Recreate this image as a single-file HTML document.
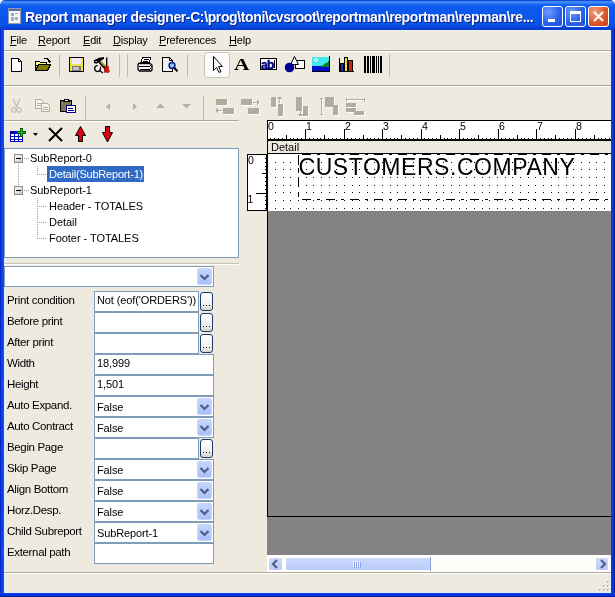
<!DOCTYPE html><html><head><meta charset="utf-8"><style>
*{margin:0;padding:0;box-sizing:border-box}
html,body{width:615px;height:597px;overflow:hidden;background:#fff}
body{position:relative;-webkit-font-smoothing:antialiased;font-family:"Liberation Sans",sans-serif;font-size:11px;color:#000}
.a{position:absolute}
#win{will-change:transform;left:0;top:0;width:615px;height:597px;background:#EEEAE0;border-radius:5px 5px 0 0;overflow:hidden}
#title{left:0;top:0;width:615px;height:30px;background:linear-gradient(180deg,#1048d8 0,#1048d8 1px,#3d8af7 1px,#3d8af7 3px,#1a66f0 4px,#0c5aee 7px,#0a57ec 50%,#0853e6 25px,#0846da 27px,#0a3ccc 29px,#0a3ccc 30px)}
#lb{left:0;top:30px;width:5px;height:567px;background:linear-gradient(90deg,#0628c8 0,#0628c8 1px,#0a44e8 1px,#0a44e8 3px,#1452e0 3px,#1452e0 4px,#e6ecf6 4px)}
#rb{left:610px;top:30px;width:5px;height:567px;background:linear-gradient(90deg,#e6ecf6 0,#e6ecf6 1px,#0a3cd8 1px,#0a3cd8 3px,#0833c0 3px,#0833c0 4px,#001ea0 4px)}
#bb{left:4px;top:592px;width:607px;height:1px;background:#e6ecf6}#bb2{left:0;top:593px;width:615px;height:4px;background:linear-gradient(180deg,#0a44e8 0,#0a44e8 1px,#0831d9 1px,#0831d9 3px,#001ea0 3px)}
.ttl{left:25px;top:9px;color:#fff;font-weight:bold;font-size:14px;white-space:nowrap;text-shadow:1px 1px #0a1e8a;letter-spacing:-0.38px}
.tb{top:6px;width:21px;height:21px;border:1px solid #fff;border-radius:3px;background:radial-gradient(circle at 30% 25%,#6e9cff,#2a63ee 55%,#1b4fd8)}
.mi{top:34px;white-space:nowrap;letter-spacing:-0.2px}
.t{white-space:nowrap;position:absolute}
.lbl{left:7px;font-size:11.5px;letter-spacing:-0.35px}
.box{left:94px;height:21px;background:#fff;border:1px solid #7F9DB9;white-space:nowrap;padding-left:2px;line-height:17px;letter-spacing:-0.12px}
.ell{left:200px;width:13px;height:19px;border:1px solid #1c3a6c;border-radius:3px;background:linear-gradient(180deg,#fff,#f3f1ec 70%,#d9d5c8)}
.dd{width:15px;height:17px;border:1px solid #c8d6fc;border-radius:2px;background:linear-gradient(180deg,#c6d5fd,#b6c9fb 60%,#aac0fa)}
</style></head><body><div id="win" class="a">
<div id="title" class="a"></div><div id="lb" class="a"></div><div id="rb" class="a"></div><div id="bb" class="a"></div><div id="bb2" class="a"></div><div class="a" style="left:4px;top:30px;width:607px;height:1px;background:#eef2f8"></div>
<div class="a ttl">Report manager designer-C:\prog\toni\cvsroot\reportman\reportman\repman\re...</div>
<div class="a tb" style="left:542px"></div><div class="a tb" style="left:565px"></div>
<div class="a tb" style="left:588px;background:radial-gradient(circle at 30% 25%,#f0a080,#e0582e 55%,#c63b14)"></div>
<div class="a mi" style="left:10px"><u>F</u>ile</div>
<div class="a mi" style="left:38px"><u>R</u>eport</div>
<div class="a mi" style="left:83px"><u>E</u>dit</div>
<div class="a mi" style="left:113px"><u>D</u>isplay</div>
<div class="a mi" style="left:159px"><u>P</u>references</div>
<div class="a mi" style="left:229px"><u>H</u>elp</div>
<div class="a" style="left:4px;top:50px;width:607px;height:1px;background:#ACA899"></div>
<div class="a" style="left:4px;top:51px;width:607px;height:1px;background:#fff"></div>
<div class="a" style="left:4px;top:85px;width:607px;height:1px;background:#ACA899"></div>
<div class="a" style="left:4px;top:86px;width:607px;height:1px;background:#fff"></div>
<div class="a" style="left:4px;top:120px;width:235px;height:1px;background:#ACA899"></div>
<div class="a" style="left:4px;top:121px;width:235px;height:1px;background:#fff"></div>
<div class="a" style="left:59px;top:54px;width:1px;height:23px;background:#C2BEAE"></div>
<div class="a" style="left:119px;top:54px;width:1px;height:23px;background:#C2BEAE"></div>
<div class="a" style="left:127px;top:54px;width:1px;height:23px;background:#C2BEAE"></div>
<div class="a" style="left:187px;top:54px;width:1px;height:23px;background:#C2BEAE"></div>
<div class="a" style="left:389px;top:54px;width:1px;height:23px;background:#C2BEAE"></div>
<div class="a" style="left:85px;top:96px;width:1px;height:24px;background:#C2BEAE"></div>
<div class="a" style="left:203px;top:96px;width:1px;height:24px;background:#C2BEAE"></div>
<div class="a" style="left:204px;top:52px;width:26px;height:26px;border:1px solid #c7c4b8;border-radius:3px;background:#fbfbf9"></div>
<div class="a" style="left:4px;top:148px;width:235px;height:110px;background:#fff;border:1px solid #7F9DB9"></div>
<div class="a" style="left:47px;top:166px;width:97px;height:16px;background:#316AC5"></div>
<div class="t" style="left:30px;top:152px;color:#000;letter-spacing:-0.05px">SubReport-0</div>
<div class="t" style="left:49px;top:168px;color:#fff;letter-spacing:-0.2px">Detail(SubReport-1)</div>
<div class="t" style="left:30px;top:184px;color:#000;letter-spacing:-0.05px">SubReport-1</div>
<div class="t" style="left:49px;top:200px;color:#000;letter-spacing:-0.05px">Header - TOTALES</div>
<div class="t" style="left:49px;top:216px;color:#000;letter-spacing:-0.05px">Detail</div>
<div class="t" style="left:49px;top:232px;color:#000;letter-spacing:-0.05px">Footer - TOTALES</div>
<div class="a" style="left:4px;top:263px;width:235px;height:1px;background:#C5C2B2"></div>
<div class="a" style="left:4px;top:264px;width:235px;height:1px;background:#fff"></div>
<div class="a" style="left:4px;top:266px;width:210px;height:21px;background:#fff;border:1px solid #7F9DB9"></div>
<div class="a" style="left:197px;top:268px;width:15px;height:17px;border:1px solid #c8d6fc;border-radius:2px;background:linear-gradient(180deg,#c6d5fd,#b6c9fb 60%,#aac0fa)"></div>
<div class="t lbl" style="top:294px">Print condition</div>
<div class="a box" style="top:291px;width:105px">Not (eof('ORDERS'))</div>
<div class="a ell" style="top:292px"></div>
<div class="t lbl" style="top:315px">Before print</div>
<div class="a box" style="top:312px;width:105px"></div>
<div class="a ell" style="top:313px"></div>
<div class="t lbl" style="top:336px">After print</div>
<div class="a box" style="top:333px;width:105px"></div>
<div class="a ell" style="top:334px"></div>
<div class="t lbl" style="top:357px">Width</div>
<div class="a box" style="top:354px;width:120px;">18,999</div>
<div class="t lbl" style="top:378px">Height</div>
<div class="a box" style="top:375px;width:120px;">1,501</div>
<div class="t lbl" style="top:399px">Auto Expand.</div>
<div class="a box" style="top:396px;width:120px;padding-top:2px">False</div>
<div class="a dd" style="left:197px;top:398px"></div>
<div class="t lbl" style="top:420px">Auto Contract</div>
<div class="a box" style="top:417px;width:120px;padding-top:2px">False</div>
<div class="a dd" style="left:197px;top:419px"></div>
<div class="t lbl" style="top:441px">Begin Page</div>
<div class="a box" style="top:438px;width:105px"></div>
<div class="a ell" style="top:439px"></div>
<div class="t lbl" style="top:462px">Skip Page</div>
<div class="a box" style="top:459px;width:120px;padding-top:2px">False</div>
<div class="a dd" style="left:197px;top:461px"></div>
<div class="t lbl" style="top:483px">Align Bottom</div>
<div class="a box" style="top:480px;width:120px;padding-top:2px">False</div>
<div class="a dd" style="left:197px;top:482px"></div>
<div class="t lbl" style="top:504px">Horz.Desp.</div>
<div class="a box" style="top:501px;width:120px;padding-top:2px">False</div>
<div class="a dd" style="left:197px;top:503px"></div>
<div class="t lbl" style="top:525px">Child Subreport</div>
<div class="a box" style="top:522px;width:120px;padding-top:2px">SubReport-1</div>
<div class="a dd" style="left:197px;top:524px"></div>
<div class="t lbl" style="top:546px">External path</div>
<div class="a box" style="top:543px;width:120px;"></div>
<div class="a" style="left:267px;top:120px;width:344px;height:21px;background:#fff;border-top:1px solid #000;border-left:1px solid #000;border-bottom:2px solid #000"></div>
<div class="a" style="left:267px;top:141px;width:344px;height:13px;border-left:1px solid #000;border-bottom:1px solid #000"></div>
<div class="t" style="left:271px;top:141px">Detail</div>
<div class="a" style="left:267px;top:154px;width:344px;height:57px;background:#fff"></div>
<div class="a" style="left:247px;top:154px;width:21px;height:57px;background:#fff;border:1px solid #000;border-right:2px solid #000"></div>
<div class="a" style="left:267px;top:211px;width:344px;height:344px;background:#858286"></div>
<div class="a" style="left:267px;top:211px;width:1px;height:306px;background:#000"></div>
<div class="a" style="left:268px;top:516px;width:343px;height:1px;background:#000"></div>
<div class="a" style="left:267px;top:555px;width:344px;height:17px;background:#fdfdfa"></div>
<div class="a" style="left:268px;top:557px;width:15px;height:14px;border:1px solid #fff;border-radius:2px;background:linear-gradient(180deg,#cddafc,#b9cbfa)"></div>
<div class="a" style="left:285px;top:557px;width:146px;height:14px;border:1px solid #fff;border-radius:2px;background:linear-gradient(180deg,#cddafc,#b9cbfa)"></div>
<div class="a" style="left:430px;top:557px;width:1px;height:14px;background:#8aa2dc"></div>
<div class="a" style="left:595px;top:557px;width:14px;height:14px;border:1px solid #fff;border-radius:2px;background:linear-gradient(180deg,#cddafc,#b9cbfa)"></div>
<div class="a" style="left:4px;top:572px;width:607px;height:1px;background:#ACA899"></div>
<div class="a" style="left:4px;top:573px;width:607px;height:1px;background:#fff"></div>
<svg class="a" style="left:0;top:0" width="615" height="597" viewBox="0 0 615 597" shape-rendering="crispEdges"><defs><linearGradient id="pmg" x1="0" y1="0" x2="1" y2="1"><stop offset="0" stop-color="#fff"/><stop offset="1" stop-color="#c8c4b4"/></linearGradient></defs><rect x="8.5" y="8.5" width="12" height="15" fill="#f8f8f8" stroke="#8a9ab8"/><rect x="9" y="9" width="11" height="2" fill="#5a6a9a"/><path d="M11 13h3v3h-3zM15 13h3v1h-3zM11 17h3v4h-3zM15 17h3v3h-3z" fill="#9aa8c8"/><rect x="548" y="19" width="7" height="3" fill="#fff"/><rect x="570.5" y="11.5" width="10" height="10" fill="none" stroke="#fff" stroke-width="1"/><rect x="570" y="11" width="11" height="3" fill="#fff"/><path d="M594 12L603 21M603 12L594 21" stroke="#fff" stroke-width="2" shape-rendering="geometricPrecision"/><path d="M11.5 58.5h7l3 3v10h-10z" fill="#fff" stroke="#000"/><path d="M18.5 58.5v3h3" fill="none" stroke="#000"/><path d="M35.5 61.5h4l1 1h6v3h-11z" fill="#ffff80" stroke="#000"/><path d="M35.5 70.5l3-6h12l-3 6z" fill="#808000" stroke="#000"/><path d="M35.5 61.5v9" stroke="#000"/><path d="M43.5 59.5q2-2 5 0l1 2" fill="none" stroke="#000"/><path d="M48 61h3l-1.5 2z" fill="#000"/><rect x="69.5" y="57.5" width="14" height="14" fill="#e8e840" stroke="#000"/><rect x="72" y="58" width="9" height="6" fill="#f6e8f6"/><rect x="72" y="66" width="9" height="5" fill="#7a7a7a"/><rect x="73" y="67" width="6" height="3" fill="#c8c0c8"/><g shape-rendering="geometricPrecision"><path d="M99.5 61.5L109 72" stroke="#000" stroke-width="3.2"/><path d="M100 61L109.3 71.3" stroke="#8c8c28" stroke-width="1.8"/><path d="M100.6 60.6L109.5 70.5" stroke="#d8d860" stroke-width="0.7"/><path d="M93.8 60.2L99 57.8L104 57V58.8L100.5 61L96.5 63.8L94 63z" fill="#000"/><rect x="95.5" y="61" width="1.2" height="1.2" fill="#fff"/><rect x="106" y="57.5" width="1.4" height="9" fill="#000"/><rect x="104.5" y="66" width="4.3" height="6.6" fill="#d81010"/><rect x="104.5" y="66" width="0.8" height="6.6" fill="#600"/><circle cx="97.6" cy="68.6" r="2.9" fill="#fff" stroke="#000" stroke-width="1.3"/><path d="M97.2 64.6l3.5 1.2-1.6 3z" fill="#fff"/><path d="M99.6 70.8L103 73" stroke="#000" stroke-width="1.2"/></g><path d="M142.5 57.5h8l-1 5h-8.5z" fill="#fff" stroke="#000"/><rect x="143.5" y="59" width="5" height="1" fill="#000"/><rect x="142.5" y="61" width="5" height="1" fill="#000"/><path d="M138.5 63.5h11.5l2 1.5v5l-1 1h-11.5l-1.5-1.5v-4.5z" fill="#fff" stroke="#000" stroke-width="1.3" shape-rendering="geometricPrecision"/><rect x="139" y="66" width="10.5" height="1.3" fill="#000"/><rect x="140" y="68.6" width="9.5" height="1" fill="#000"/><path d="M149 63h1v1h-1zM151 64h1v1h-1zM150 65h1v1h-1zM151 66h1v1h-1zM150 68h1v1h-1zM149 70h1v1h-1z" fill="#000"/><path d="M162.5 57.5h7l3 3v11h-10z" fill="#fff" stroke="#000"/><path d="M169.5 57.5v3h3" fill="none" stroke="#000"/><rect x="163" y="58" width="6" height="13" fill="#f4eef4"/><circle cx="172" cy="65.5" r="2.9" fill="#8cc4f4" stroke="#001880" stroke-width="1.5" shape-rendering="geometricPrecision"/><path d="M174.2 67.8l3.3 3.6" stroke="#000" stroke-width="2" shape-rendering="geometricPrecision"/><path d="M213.5 56.5v14l3-3 2.5 5 2-1-2.5-5h4z" fill="#fff" stroke="#000" shape-rendering="geometricPrecision"/><text x="0" y="0" transform="matrix(1.3,0,0,1,234,70)" font-family="Liberation Serif" font-weight="bold" font-size="16.5" shape-rendering="geometricPrecision">A</text><rect x="260.5" y="58.5" width="16" height="11" fill="#fff" stroke="#000"/><rect x="261" y="69" width="16" height="1" fill="#000"/><rect x="276" y="59" width="1" height="11" fill="#000"/><text x="261" y="68.5" font-family="Liberation Sans" font-weight="bold" font-size="12" letter-spacing="-0.7" fill="#000080" stroke="#000080" stroke-width="0.4">ab</text><rect x="274" y="60" width="1" height="8" fill="#000"/><rect x="295.5" y="60.5" width="9" height="8" fill="#fff" stroke="#000"/><path d="M294.5 56.5l4 8h-8z" fill="#fff" stroke="#000" shape-rendering="geometricPrecision"/><circle cx="289.5" cy="67.5" r="4.8" fill="#000090" shape-rendering="geometricPrecision"/><rect x="312" y="57" width="17" height="10" fill="#40e8f0"/><path d="M312 66h17v6h-17z" fill="#0010c8"/><path d="M320 67l9-6v6z" fill="#108030"/><rect x="329" y="56" width="1" height="16" fill="#000"/><rect x="312" y="71" width="18" height="1" fill="#000"/><circle cx="316" cy="60" r="1.5" fill="none" stroke="#fff" shape-rendering="geometricPrecision"/><path d="M338.5 71.5h15" stroke="#000"/><path d="M339.5 58v13" stroke="#000"/><rect x="340.5" y="63.5" width="3" height="8" fill="#2030c0" stroke="#000"/><rect x="344.5" y="57.5" width="3" height="14" fill="#f0e020" stroke="#000"/><rect x="348.5" y="60.5" width="4" height="11" fill="#d02020" stroke="#000"/><rect x="364" y="56" width="2" height="17" fill="#000"/><rect x="367" y="56" width="2" height="17" fill="#000"/><rect x="370" y="56" width="1" height="17" fill="#000"/><rect x="372" y="56" width="3" height="17" fill="#000"/><rect x="376" y="56" width="1" height="17" fill="#000"/><rect x="378" y="56" width="1" height="17" fill="#000"/><rect x="380" y="56" width="2" height="17" fill="#000"/><path d="M13 99l4 8M20 99l-4 8" stroke="#b4b0a0" stroke-width="1" shape-rendering="geometricPrecision"/><circle cx="14" cy="110" r="2.3" fill="none" stroke="#b4b0a0" shape-rendering="geometricPrecision"/><circle cx="19" cy="110" r="2.3" fill="none" stroke="#b4b0a0" shape-rendering="geometricPrecision"/><path d="M35.5 99.5h6l2 2v7h-8z" fill="#f4f2ea" stroke="#b4b0a0"/><path d="M41.5 103.5h6l2 2v6h-8z" fill="#f4f2ea" stroke="#b4b0a0"/><path d="M37 103h4M37 105h4M43 107h5M43 109h5" stroke="#b4b0a0"/><rect x="60.5" y="100.5" width="11" height="11" fill="#807850" stroke="#000"/><path d="M63.5 101.5l1.5-2h3l1.5 2z" fill="#fff" stroke="#000"/><rect x="66.5" y="105.5" width="9" height="7" fill="#fff" stroke="#000080"/><path d="M68 108h5M68 110h6" stroke="#000080"/><path d="M110 103v7l-4-3.5z" fill="#b4b0a0" shape-rendering="geometricPrecision"/><path d="M133 103v7l4-3.5z" fill="#b4b0a0" shape-rendering="geometricPrecision"/><path d="M156 108h9l-4.5-4.5z" fill="#b4b0a0" shape-rendering="geometricPrecision"/><path d="M182 104h9l-4.5 4.5z" fill="#b4b0a0" shape-rendering="geometricPrecision"/><g transform="translate(1,1)"><rect x="216" y="99" width="11" height="6" fill="#ffffff"/><rect x="223" y="108" width="11" height="6" fill="#ffffff"/><path d="M216 110.5h6M216 110.5l2-2M216 110.5l2 2" stroke="#ffffff"/><rect x="241" y="99" width="11" height="6" fill="#ffffff"/><rect x="248" y="108" width="11" height="6" fill="#ffffff"/><path d="M253 102.5h6M259 102.5l-2-2M259 102.5l-2 2" stroke="#ffffff"/><rect x="271" y="97" width="5" height="10" fill="#ffffff"/><rect x="278" y="104" width="5" height="12" fill="#ffffff"/><path d="M279.5 97v6M279.5 97l-2 2M279.5 97l2 2" stroke="#ffffff"/><rect x="296" y="97" width="6" height="14" fill="#ffffff"/><rect x="303" y="106" width="5" height="10" fill="#ffffff"/><path d="M300.5 110v6M300.5 116l-2-2M300.5 116l2-2" stroke="#ffffff"/><rect x="325" y="97" width="9" height="10" fill="#ffffff"/><rect x="333" y="105" width="5" height="10" fill="#ffffff"/><path d="M321.5 98v16M320 98h3M320 114h3" stroke="#ffffff"/><path d="M346 99.5h18M346 98v4M364 98v4" stroke="#ffffff"/><rect x="346" y="103" width="10" height="4" fill="#ffffff"/><rect x="346" y="108" width="10" height="4" fill="#ffffff"/><rect x="354" y="111" width="10" height="4" fill="#ffffff"/></g><rect x="216" y="99" width="11" height="6" fill="#b0ac9e"/><rect x="223" y="108" width="11" height="6" fill="#b0ac9e"/><path d="M216 110.5h6M216 110.5l2-2M216 110.5l2 2" stroke="#b0ac9e"/><rect x="241" y="99" width="11" height="6" fill="#b0ac9e"/><rect x="248" y="108" width="11" height="6" fill="#b0ac9e"/><path d="M253 102.5h6M259 102.5l-2-2M259 102.5l-2 2" stroke="#b0ac9e"/><rect x="271" y="97" width="5" height="10" fill="#b0ac9e"/><rect x="278" y="104" width="5" height="12" fill="#b0ac9e"/><path d="M279.5 97v6M279.5 97l-2 2M279.5 97l2 2" stroke="#b0ac9e"/><rect x="296" y="97" width="6" height="14" fill="#b0ac9e"/><rect x="303" y="106" width="5" height="10" fill="#b0ac9e"/><path d="M300.5 110v6M300.5 116l-2-2M300.5 116l2-2" stroke="#b0ac9e"/><rect x="325" y="97" width="9" height="10" fill="#b0ac9e"/><rect x="333" y="105" width="5" height="10" fill="#b0ac9e"/><path d="M321.5 98v16M320 98h3M320 114h3" stroke="#b0ac9e"/><path d="M346 99.5h18M346 98v4M364 98v4" stroke="#b0ac9e"/><rect x="346" y="103" width="10" height="4" fill="#b0ac9e"/><rect x="346" y="108" width="10" height="4" fill="#b0ac9e"/><rect x="354" y="111" width="10" height="4" fill="#b0ac9e"/><rect x="10.5" y="131.5" width="12" height="10" fill="#fff" stroke="#0000c0"/><rect x="10" y="131" width="13" height="3" fill="#0000c0"/><path d="M11 136.5h11M11 139h11M14.5 134v7M18.5 134v7" stroke="#0000c0"/><path d="M20.5 128.5h2v3h3v2h-3v3h-2v-3h-3v-2h3z" fill="#20c020" stroke="#006000"/><path d="M33 133h5l-2.5 3z" fill="#000" shape-rendering="geometricPrecision"/><path d="M49 128l13 13M62 128l-13 13" stroke="#000" stroke-width="2" shape-rendering="geometricPrecision"/><path d="M80.5 126.5l5 9h-3v6h-4v-6h-3z" fill="#e00010" stroke="#000" shape-rendering="geometricPrecision"/><path d="M105.5 126.5h4v6h3l-5 9.5-5-9.5h3z" fill="#e00010" stroke="#000" shape-rendering="geometricPrecision"/><rect x="14.5" y="154.5" width="8" height="8" rx="1" fill="url(#pmg)" stroke="#8c8c8c"/><rect x="16" y="158" width="5" height="1" fill="#000"/><rect x="14.5" y="186.5" width="8" height="8" rx="1" fill="url(#pmg)" stroke="#8c8c8c"/><rect x="16" y="190" width="5" height="1" fill="#000"/><path fill="#a0a0a0" d="M24 158h1v1h-1zM26 158h1v1h-1zM28 158h1v1h-1zM24 190h1v1h-1zM26 190h1v1h-1zM28 190h1v1h-1zM18 164h1v1h-1zM18 166h1v1h-1zM18 168h1v1h-1zM18 170h1v1h-1zM18 172h1v1h-1zM18 174h1v1h-1zM18 176h1v1h-1zM18 178h1v1h-1zM18 180h1v1h-1zM18 182h1v1h-1zM18 184h1v1h-1zM37 166h1v1h-1zM37 168h1v1h-1zM37 170h1v1h-1zM37 172h1v1h-1zM37 174h1v1h-1zM39 174h1v1h-1zM41 174h1v1h-1zM43 174h1v1h-1zM45 174h1v1h-1zM37 198h1v1h-1zM37 200h1v1h-1zM37 202h1v1h-1zM37 204h1v1h-1zM37 206h1v1h-1zM37 208h1v1h-1zM37 210h1v1h-1zM37 212h1v1h-1zM37 214h1v1h-1zM37 216h1v1h-1zM37 218h1v1h-1zM37 220h1v1h-1zM37 222h1v1h-1zM37 224h1v1h-1zM37 226h1v1h-1zM37 228h1v1h-1zM37 230h1v1h-1zM37 232h1v1h-1zM37 234h1v1h-1zM37 236h1v1h-1zM37 238h1v1h-1zM39 206h1v1h-1zM41 206h1v1h-1zM43 206h1v1h-1zM45 206h1v1h-1zM39 222h1v1h-1zM41 222h1v1h-1zM43 222h1v1h-1zM45 222h1v1h-1zM39 238h1v1h-1zM41 238h1v1h-1zM43 238h1v1h-1zM45 238h1v1h-1z"/><path d="M200.5 275l4 4 4-4" fill="none" stroke="#4d6185" stroke-width="2.2" shape-rendering="geometricPrecision"/><rect x="203" y="305" width="1" height="1" fill="#000"/><rect x="206" y="305" width="1" height="1" fill="#000"/><rect x="209" y="305" width="1" height="1" fill="#000"/><rect x="203" y="326" width="1" height="1" fill="#000"/><rect x="206" y="326" width="1" height="1" fill="#000"/><rect x="209" y="326" width="1" height="1" fill="#000"/><rect x="203" y="347" width="1" height="1" fill="#000"/><rect x="206" y="347" width="1" height="1" fill="#000"/><rect x="209" y="347" width="1" height="1" fill="#000"/><path d="M200.5 405l4 4 4-4" fill="none" stroke="#4d6185" stroke-width="2.2" shape-rendering="geometricPrecision"/><path d="M200.5 426l4 4 4-4" fill="none" stroke="#4d6185" stroke-width="2.2" shape-rendering="geometricPrecision"/><rect x="203" y="452" width="1" height="1" fill="#000"/><rect x="206" y="452" width="1" height="1" fill="#000"/><rect x="209" y="452" width="1" height="1" fill="#000"/><path d="M200.5 468l4 4 4-4" fill="none" stroke="#4d6185" stroke-width="2.2" shape-rendering="geometricPrecision"/><path d="M200.5 489l4 4 4-4" fill="none" stroke="#4d6185" stroke-width="2.2" shape-rendering="geometricPrecision"/><path d="M200.5 510l4 4 4-4" fill="none" stroke="#4d6185" stroke-width="2.2" shape-rendering="geometricPrecision"/><path d="M200.5 531l4 4 4-4" fill="none" stroke="#4d6185" stroke-width="2.2" shape-rendering="geometricPrecision"/><path d="M277 560l-4 4 4 4" fill="none" stroke="#4d6185" stroke-width="2.2" shape-rendering="geometricPrecision"/><path d="M601 560l4 4-4 4" fill="none" stroke="#4d6185" stroke-width="2.2" shape-rendering="geometricPrecision"/><path d="M353 561h1v6h-1zM355 561h1v6h-1zM357 561h1v6h-1zM359 561h1v6h-1z" fill="#eef2fe"/><path d="M354 562h1v6h-1zM356 562h1v6h-1zM358 562h1v6h-1zM360 562h1v6h-1z" fill="#8ca6e8"/><rect x="607" y="581" width="2" height="2" fill="#b9b5a5"/><rect x="608" y="582" width="1" height="1" fill="#fff"/><rect x="603" y="585" width="2" height="2" fill="#b9b5a5"/><rect x="604" y="586" width="1" height="1" fill="#fff"/><rect x="607" y="585" width="2" height="2" fill="#b9b5a5"/><rect x="608" y="586" width="1" height="1" fill="#fff"/><rect x="599" y="589" width="2" height="2" fill="#b9b5a5"/><rect x="600" y="590" width="1" height="1" fill="#fff"/><rect x="603" y="589" width="2" height="2" fill="#b9b5a5"/><rect x="604" y="590" width="1" height="1" fill="#fff"/><rect x="607" y="589" width="2" height="2" fill="#b9b5a5"/><rect x="608" y="590" width="1" height="1" fill="#fff"/><rect x="267" y="129" width="1" height="10" fill="#000"/><rect x="270" y="138" width="1" height="1" fill="#000"/><rect x="274" y="138" width="1" height="1" fill="#000"/><rect x="278" y="138" width="1" height="1" fill="#000"/><rect x="282" y="138" width="1" height="1" fill="#000"/><rect x="286" y="135" width="1" height="4" fill="#000"/><rect x="290" y="138" width="1" height="1" fill="#000"/><rect x="293" y="138" width="1" height="1" fill="#000"/><rect x="297" y="138" width="1" height="1" fill="#000"/><rect x="301" y="138" width="1" height="1" fill="#000"/><rect x="305" y="129" width="1" height="10" fill="#000"/><rect x="309" y="138" width="1" height="1" fill="#000"/><rect x="313" y="138" width="1" height="1" fill="#000"/><rect x="317" y="138" width="1" height="1" fill="#000"/><rect x="320" y="138" width="1" height="1" fill="#000"/><rect x="324" y="135" width="1" height="4" fill="#000"/><rect x="328" y="138" width="1" height="1" fill="#000"/><rect x="332" y="138" width="1" height="1" fill="#000"/><rect x="336" y="138" width="1" height="1" fill="#000"/><rect x="340" y="138" width="1" height="1" fill="#000"/><rect x="344" y="129" width="1" height="10" fill="#000"/><rect x="347" y="138" width="1" height="1" fill="#000"/><rect x="351" y="138" width="1" height="1" fill="#000"/><rect x="355" y="138" width="1" height="1" fill="#000"/><rect x="359" y="138" width="1" height="1" fill="#000"/><rect x="363" y="135" width="1" height="4" fill="#000"/><rect x="367" y="138" width="1" height="1" fill="#000"/><rect x="370" y="138" width="1" height="1" fill="#000"/><rect x="374" y="138" width="1" height="1" fill="#000"/><rect x="378" y="138" width="1" height="1" fill="#000"/><rect x="382" y="129" width="1" height="10" fill="#000"/><rect x="386" y="138" width="1" height="1" fill="#000"/><rect x="390" y="138" width="1" height="1" fill="#000"/><rect x="394" y="138" width="1" height="1" fill="#000"/><rect x="397" y="138" width="1" height="1" fill="#000"/><rect x="401" y="135" width="1" height="4" fill="#000"/><rect x="405" y="138" width="1" height="1" fill="#000"/><rect x="409" y="138" width="1" height="1" fill="#000"/><rect x="413" y="138" width="1" height="1" fill="#000"/><rect x="417" y="138" width="1" height="1" fill="#000"/><rect x="421" y="129" width="1" height="10" fill="#000"/><rect x="424" y="138" width="1" height="1" fill="#000"/><rect x="428" y="138" width="1" height="1" fill="#000"/><rect x="432" y="138" width="1" height="1" fill="#000"/><rect x="436" y="138" width="1" height="1" fill="#000"/><rect x="440" y="135" width="1" height="4" fill="#000"/><rect x="444" y="138" width="1" height="1" fill="#000"/><rect x="447" y="138" width="1" height="1" fill="#000"/><rect x="451" y="138" width="1" height="1" fill="#000"/><rect x="455" y="138" width="1" height="1" fill="#000"/><rect x="459" y="129" width="1" height="10" fill="#000"/><rect x="463" y="138" width="1" height="1" fill="#000"/><rect x="467" y="138" width="1" height="1" fill="#000"/><rect x="471" y="138" width="1" height="1" fill="#000"/><rect x="474" y="138" width="1" height="1" fill="#000"/><rect x="478" y="135" width="1" height="4" fill="#000"/><rect x="482" y="138" width="1" height="1" fill="#000"/><rect x="486" y="138" width="1" height="1" fill="#000"/><rect x="490" y="138" width="1" height="1" fill="#000"/><rect x="494" y="138" width="1" height="1" fill="#000"/><rect x="498" y="129" width="1" height="10" fill="#000"/><rect x="501" y="138" width="1" height="1" fill="#000"/><rect x="505" y="138" width="1" height="1" fill="#000"/><rect x="509" y="138" width="1" height="1" fill="#000"/><rect x="513" y="138" width="1" height="1" fill="#000"/><rect x="517" y="135" width="1" height="4" fill="#000"/><rect x="521" y="138" width="1" height="1" fill="#000"/><rect x="524" y="138" width="1" height="1" fill="#000"/><rect x="528" y="138" width="1" height="1" fill="#000"/><rect x="532" y="138" width="1" height="1" fill="#000"/><rect x="536" y="129" width="1" height="10" fill="#000"/><rect x="540" y="138" width="1" height="1" fill="#000"/><rect x="544" y="138" width="1" height="1" fill="#000"/><rect x="548" y="138" width="1" height="1" fill="#000"/><rect x="551" y="138" width="1" height="1" fill="#000"/><rect x="555" y="135" width="1" height="4" fill="#000"/><rect x="559" y="138" width="1" height="1" fill="#000"/><rect x="563" y="138" width="1" height="1" fill="#000"/><rect x="567" y="138" width="1" height="1" fill="#000"/><rect x="571" y="138" width="1" height="1" fill="#000"/><rect x="575" y="129" width="1" height="10" fill="#000"/><rect x="578" y="138" width="1" height="1" fill="#000"/><rect x="582" y="138" width="1" height="1" fill="#000"/><rect x="586" y="138" width="1" height="1" fill="#000"/><rect x="590" y="138" width="1" height="1" fill="#000"/><rect x="594" y="135" width="1" height="4" fill="#000"/><rect x="598" y="138" width="1" height="1" fill="#000"/><rect x="601" y="138" width="1" height="1" fill="#000"/><rect x="605" y="138" width="1" height="1" fill="#000"/><rect x="609" y="138" width="1" height="1" fill="#000"/><text x="268" y="130" font-size="10.5" font-family="Liberation Sans">0</text><text x="306" y="130" font-size="10.5" font-family="Liberation Sans">1</text><text x="345" y="130" font-size="10.5" font-family="Liberation Sans">2</text><text x="383" y="130" font-size="10.5" font-family="Liberation Sans">3</text><text x="422" y="130" font-size="10.5" font-family="Liberation Sans">4</text><text x="460" y="130" font-size="10.5" font-family="Liberation Sans">5</text><text x="499" y="130" font-size="10.5" font-family="Liberation Sans">6</text><text x="537" y="130" font-size="10.5" font-family="Liberation Sans">7</text><text x="576" y="130" font-size="10.5" font-family="Liberation Sans">8</text><rect x="256" y="154" width="10" height="1" fill="#000"/><rect x="265" y="158" width="1" height="1" fill="#000"/><rect x="265" y="162" width="1" height="1" fill="#000"/><rect x="265" y="166" width="1" height="1" fill="#000"/><rect x="265" y="169" width="1" height="1" fill="#000"/><rect x="262" y="173" width="4" height="1" fill="#000"/><rect x="265" y="177" width="1" height="1" fill="#000"/><rect x="265" y="181" width="1" height="1" fill="#000"/><rect x="265" y="185" width="1" height="1" fill="#000"/><rect x="265" y="189" width="1" height="1" fill="#000"/><rect x="256" y="193" width="10" height="1" fill="#000"/><rect x="265" y="196" width="1" height="1" fill="#000"/><rect x="265" y="200" width="1" height="1" fill="#000"/><rect x="265" y="204" width="1" height="1" fill="#000"/><rect x="265" y="208" width="1" height="1" fill="#000"/><text x="248" y="164" font-size="10.5" font-family="Liberation Sans">0</text><text x="247.5" y="203" font-size="10.5" font-family="Liberation Sans">1</text><path fill="#000" d="M275 162h1v1h-1zM275 169h1v1h-1zM275 177h1v1h-1zM275 185h1v1h-1zM275 192h1v1h-1zM275 200h1v1h-1zM275 208h1v1h-1zM283 162h1v1h-1zM283 169h1v1h-1zM283 177h1v1h-1zM283 185h1v1h-1zM283 192h1v1h-1zM283 200h1v1h-1zM283 208h1v1h-1zM290 162h1v1h-1zM290 169h1v1h-1zM290 177h1v1h-1zM290 185h1v1h-1zM290 192h1v1h-1zM290 200h1v1h-1zM290 208h1v1h-1zM298 162h1v1h-1zM298 169h1v1h-1zM298 177h1v1h-1zM298 185h1v1h-1zM298 192h1v1h-1zM298 200h1v1h-1zM298 208h1v1h-1zM306 162h1v1h-1zM306 169h1v1h-1zM306 177h1v1h-1zM306 185h1v1h-1zM306 192h1v1h-1zM306 200h1v1h-1zM306 208h1v1h-1zM313 162h1v1h-1zM313 169h1v1h-1zM313 177h1v1h-1zM313 185h1v1h-1zM313 192h1v1h-1zM313 200h1v1h-1zM313 208h1v1h-1zM321 162h1v1h-1zM321 169h1v1h-1zM321 177h1v1h-1zM321 185h1v1h-1zM321 192h1v1h-1zM321 200h1v1h-1zM321 208h1v1h-1zM329 162h1v1h-1zM329 169h1v1h-1zM329 177h1v1h-1zM329 185h1v1h-1zM329 192h1v1h-1zM329 200h1v1h-1zM329 208h1v1h-1zM336 162h1v1h-1zM336 169h1v1h-1zM336 177h1v1h-1zM336 185h1v1h-1zM336 192h1v1h-1zM336 200h1v1h-1zM336 208h1v1h-1zM344 162h1v1h-1zM344 169h1v1h-1zM344 177h1v1h-1zM344 185h1v1h-1zM344 192h1v1h-1zM344 200h1v1h-1zM344 208h1v1h-1zM352 162h1v1h-1zM352 169h1v1h-1zM352 177h1v1h-1zM352 185h1v1h-1zM352 192h1v1h-1zM352 200h1v1h-1zM352 208h1v1h-1zM359 162h1v1h-1zM359 169h1v1h-1zM359 177h1v1h-1zM359 185h1v1h-1zM359 192h1v1h-1zM359 200h1v1h-1zM359 208h1v1h-1zM367 162h1v1h-1zM367 169h1v1h-1zM367 177h1v1h-1zM367 185h1v1h-1zM367 192h1v1h-1zM367 200h1v1h-1zM367 208h1v1h-1zM374 162h1v1h-1zM374 169h1v1h-1zM374 177h1v1h-1zM374 185h1v1h-1zM374 192h1v1h-1zM374 200h1v1h-1zM374 208h1v1h-1zM382 162h1v1h-1zM382 169h1v1h-1zM382 177h1v1h-1zM382 185h1v1h-1zM382 192h1v1h-1zM382 200h1v1h-1zM382 208h1v1h-1zM390 162h1v1h-1zM390 169h1v1h-1zM390 177h1v1h-1zM390 185h1v1h-1zM390 192h1v1h-1zM390 200h1v1h-1zM390 208h1v1h-1zM397 162h1v1h-1zM397 169h1v1h-1zM397 177h1v1h-1zM397 185h1v1h-1zM397 192h1v1h-1zM397 200h1v1h-1zM397 208h1v1h-1zM405 162h1v1h-1zM405 169h1v1h-1zM405 177h1v1h-1zM405 185h1v1h-1zM405 192h1v1h-1zM405 200h1v1h-1zM405 208h1v1h-1zM413 162h1v1h-1zM413 169h1v1h-1zM413 177h1v1h-1zM413 185h1v1h-1zM413 192h1v1h-1zM413 200h1v1h-1zM413 208h1v1h-1zM420 162h1v1h-1zM420 169h1v1h-1zM420 177h1v1h-1zM420 185h1v1h-1zM420 192h1v1h-1zM420 200h1v1h-1zM420 208h1v1h-1zM428 162h1v1h-1zM428 169h1v1h-1zM428 177h1v1h-1zM428 185h1v1h-1zM428 192h1v1h-1zM428 200h1v1h-1zM428 208h1v1h-1zM436 162h1v1h-1zM436 169h1v1h-1zM436 177h1v1h-1zM436 185h1v1h-1zM436 192h1v1h-1zM436 200h1v1h-1zM436 208h1v1h-1zM443 162h1v1h-1zM443 169h1v1h-1zM443 177h1v1h-1zM443 185h1v1h-1zM443 192h1v1h-1zM443 200h1v1h-1zM443 208h1v1h-1zM451 162h1v1h-1zM451 169h1v1h-1zM451 177h1v1h-1zM451 185h1v1h-1zM451 192h1v1h-1zM451 200h1v1h-1zM451 208h1v1h-1zM459 162h1v1h-1zM459 169h1v1h-1zM459 177h1v1h-1zM459 185h1v1h-1zM459 192h1v1h-1zM459 200h1v1h-1zM459 208h1v1h-1zM466 162h1v1h-1zM466 169h1v1h-1zM466 177h1v1h-1zM466 185h1v1h-1zM466 192h1v1h-1zM466 200h1v1h-1zM466 208h1v1h-1zM474 162h1v1h-1zM474 169h1v1h-1zM474 177h1v1h-1zM474 185h1v1h-1zM474 192h1v1h-1zM474 200h1v1h-1zM474 208h1v1h-1zM482 162h1v1h-1zM482 169h1v1h-1zM482 177h1v1h-1zM482 185h1v1h-1zM482 192h1v1h-1zM482 200h1v1h-1zM482 208h1v1h-1zM489 162h1v1h-1zM489 169h1v1h-1zM489 177h1v1h-1zM489 185h1v1h-1zM489 192h1v1h-1zM489 200h1v1h-1zM489 208h1v1h-1zM497 162h1v1h-1zM497 169h1v1h-1zM497 177h1v1h-1zM497 185h1v1h-1zM497 192h1v1h-1zM497 200h1v1h-1zM497 208h1v1h-1zM505 162h1v1h-1zM505 169h1v1h-1zM505 177h1v1h-1zM505 185h1v1h-1zM505 192h1v1h-1zM505 200h1v1h-1zM505 208h1v1h-1zM512 162h1v1h-1zM512 169h1v1h-1zM512 177h1v1h-1zM512 185h1v1h-1zM512 192h1v1h-1zM512 200h1v1h-1zM512 208h1v1h-1zM520 162h1v1h-1zM520 169h1v1h-1zM520 177h1v1h-1zM520 185h1v1h-1zM520 192h1v1h-1zM520 200h1v1h-1zM520 208h1v1h-1zM528 162h1v1h-1zM528 169h1v1h-1zM528 177h1v1h-1zM528 185h1v1h-1zM528 192h1v1h-1zM528 200h1v1h-1zM528 208h1v1h-1zM535 162h1v1h-1zM535 169h1v1h-1zM535 177h1v1h-1zM535 185h1v1h-1zM535 192h1v1h-1zM535 200h1v1h-1zM535 208h1v1h-1zM543 162h1v1h-1zM543 169h1v1h-1zM543 177h1v1h-1zM543 185h1v1h-1zM543 192h1v1h-1zM543 200h1v1h-1zM543 208h1v1h-1zM551 162h1v1h-1zM551 169h1v1h-1zM551 177h1v1h-1zM551 185h1v1h-1zM551 192h1v1h-1zM551 200h1v1h-1zM551 208h1v1h-1zM558 162h1v1h-1zM558 169h1v1h-1zM558 177h1v1h-1zM558 185h1v1h-1zM558 192h1v1h-1zM558 200h1v1h-1zM558 208h1v1h-1zM566 162h1v1h-1zM566 169h1v1h-1zM566 177h1v1h-1zM566 185h1v1h-1zM566 192h1v1h-1zM566 200h1v1h-1zM566 208h1v1h-1zM573 162h1v1h-1zM573 169h1v1h-1zM573 177h1v1h-1zM573 185h1v1h-1zM573 192h1v1h-1zM573 200h1v1h-1zM573 208h1v1h-1zM581 162h1v1h-1zM581 169h1v1h-1zM581 177h1v1h-1zM581 185h1v1h-1zM581 192h1v1h-1zM581 200h1v1h-1zM581 208h1v1h-1zM589 162h1v1h-1zM589 169h1v1h-1zM589 177h1v1h-1zM589 185h1v1h-1zM589 192h1v1h-1zM589 200h1v1h-1zM589 208h1v1h-1zM596 162h1v1h-1zM596 169h1v1h-1zM596 177h1v1h-1zM596 185h1v1h-1zM596 192h1v1h-1zM596 200h1v1h-1zM596 208h1v1h-1zM604 162h1v1h-1zM604 169h1v1h-1zM604 177h1v1h-1zM604 185h1v1h-1zM604 192h1v1h-1zM604 200h1v1h-1zM604 208h1v1h-1z"/><path d="M298 155h1v10h-1zM298 168h1v5h-1zM298 177h1v10h-1zM298 192h1v5h-1z" fill="#000"/><path d="M298 199.5H611" stroke="#000" stroke-width="1" stroke-dasharray="8.5 6.5 3 6" stroke-dashoffset="20" fill="none"/><path d="M298 154.5H611" stroke="#000" stroke-width="1" stroke-dasharray="8.5 6.5 3 6" stroke-dashoffset="20" fill="none"/><text x="298.5" y="174.5" font-size="23" letter-spacing="0.55" font-family="Liberation Sans">CUSTOMERS.COMPANY</text></svg>
</div></body></html>
